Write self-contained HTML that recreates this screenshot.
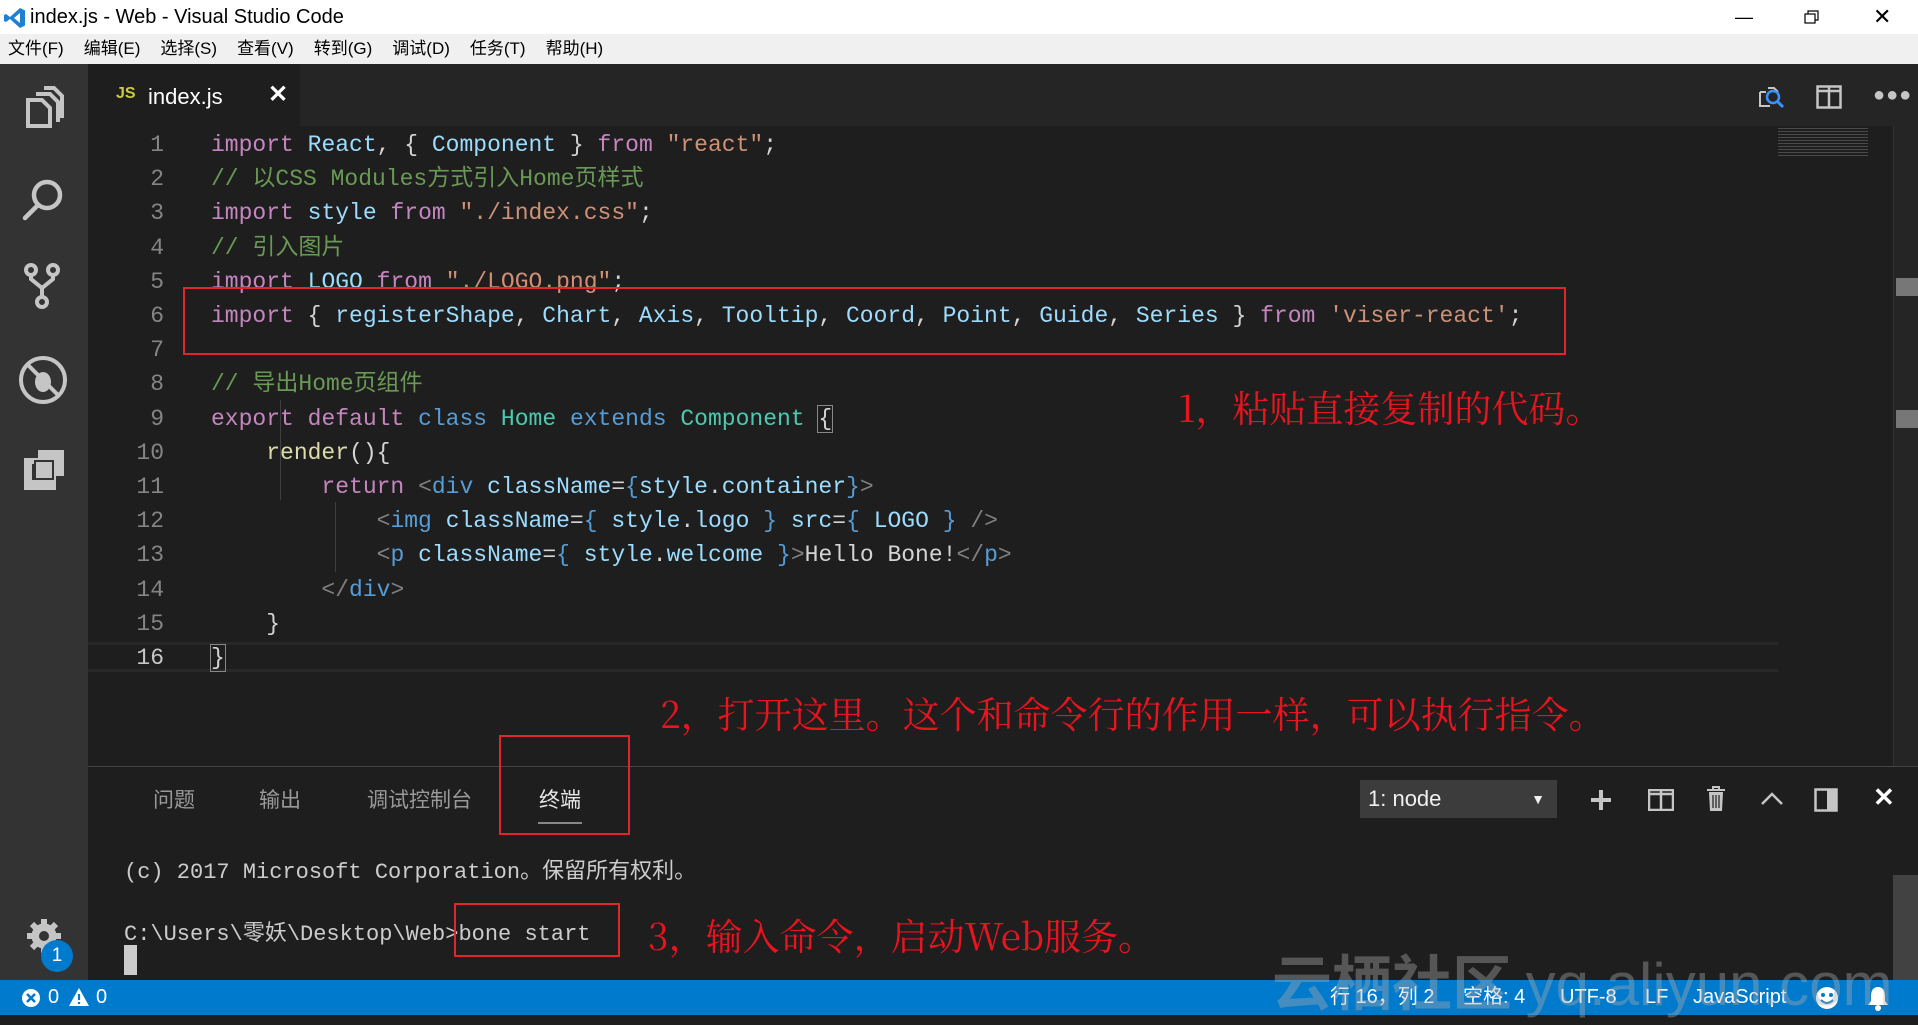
<!DOCTYPE html>
<html><head><meta charset="utf-8"><style>
*{margin:0;padding:0;box-sizing:border-box}
body{width:1918px;height:1015px;overflow:hidden;background:#1e1e1e;position:relative;font-family:"Liberation Sans","Noto Sans CJK SC",sans-serif}
.a{position:absolute}
.title{left:0;top:0;width:1918px;height:34px;background:#fff;color:#000;font-size:20px;line-height:34px}
.menu{left:0;top:34px;width:1918px;height:30px;background:#f0f0f0;color:#000;font-size:17px;line-height:30px}
.menu span{margin-left:8px;margin-right:12px}
.act{left:0;top:64px;width:88px;height:916px;background:#333}
.tabs{left:88px;top:64px;width:1830px;height:62px;background:#252526}
.tab{left:88px;top:64px;width:212px;height:62px;background:#1e1e1e}
.code{left:88px;top:128px;font-family:"Liberation Mono","Noto Sans CJK SC",monospace;font-size:23px;line-height:34.2px;white-space:pre}
.ln{position:absolute;left:0;width:76px;text-align:right;color:#858585}
.tx{position:absolute;left:123px}
.k{color:#c586c0}.v{color:#9cdcfe}.s{color:#ce9178}.c{color:#6a9955}.b{color:#569cd6}.t{color:#4ec9b0}.f{color:#dcdcaa}.p{color:#d4d4d4}.g{color:#808080}
.red{position:absolute;border:2px solid #e0262b}
.ann{position:absolute;color:#e8141e;font-family:"Noto Serif CJK SC","Liberation Serif",serif;font-size:37px;line-height:40px;white-space:nowrap}
.panel{left:88px;top:766px;width:1830px;height:214px;background:#1e1e1e;border-top:1px solid #444}
.ptab{position:absolute;top:784px;font-size:21px;color:#999}
.term{position:absolute;left:124px;font-family:"Liberation Mono","Noto Sans CJK SC",monospace;font-size:22px;color:#ccc;white-space:pre}
.status{left:0;top:980px;width:1918px;height:35px;background:#007acc;color:#fff;font-size:20px;line-height:35px}
</style></head><body>
<div class="a title"><svg class="a" style="left:3px;top:6px" width="24" height="24" viewBox="0 0 24 24"><path d="M17 2 L22 4.5 V19.5 L17 22 L7 13 L3 16 L1 15 V9 L3 8 L7 11 Z M17 7 L11 12 L17 17 Z" fill="#1f7fd1"/></svg><span class="a" style="left:30px">index.js - Web - Visual Studio Code</span>
<span class="a" style="left:1735px;top:0;font-size:18px">—</span>
<svg class="a" style="left:1804px;top:10px" width="16" height="14"><rect x="1" y="4" width="10" height="9" fill="none" stroke="#000" stroke-width="1.2"/><path d="M4 4V1H14V10H11" fill="none" stroke="#000" stroke-width="1.2"/></svg>
<span class="a" style="left:1873px;top:0;font-size:22px">✕</span></div>
<div class="a menu"><span>文件(F)</span><span>编辑(E)</span><span>选择(S)</span><span>查看(V)</span><span>转到(G)</span><span>调试(D)</span><span>任务(T)</span><span>帮助(H)</span></div>
<div class="a act">
<svg class="a" style="left:24px;top:22px" width="40" height="44" viewBox="0 0 40 44" fill="none" stroke="#c5c5c5" stroke-width="4"><path d="M4 14h14l8 8v18H4z"/><path d="M12 8h14l8 8v20"/><path d="M20 2h10l8 8v22"/></svg>
<svg class="a" style="left:20px;top:112px" width="46" height="46" viewBox="0 0 46 46" fill="none" stroke="#c5c5c5" stroke-width="4.5"><circle cx="27" cy="19" r="13"/><path d="M18 29L5 42" stroke-linecap="round"/></svg>
<svg class="a" style="left:22px;top:198px" width="40" height="48" viewBox="0 0 40 48" fill="none" stroke="#c5c5c5" stroke-width="4"><circle cx="9" cy="8" r="5"/><circle cx="31" cy="8" r="5"/><circle cx="20" cy="40" r="5"/><path d="M9 13v4l11 9 11-9v-4M20 26v9"/></svg>
<svg class="a" style="left:17px;top:290px" width="52" height="52" viewBox="0 0 52 52" fill="none" stroke="#c5c5c5" stroke-width="4"><circle cx="26" cy="26" r="22"/><path d="M11 11l30 30"/><ellipse cx="26" cy="28" rx="8" ry="10" fill="#c5c5c5" stroke="none"/></svg>
<svg class="a" style="left:24px;top:386px" width="40" height="40" viewBox="0 0 40 40"><path d="M0 8h14V0h26v26h-8v14H0z" fill="#c5c5c5"/><rect x="8" y="14" width="16" height="16" fill="#333"/><rect x="11" y="11" width="18" height="18" fill="#c5c5c5" stroke="#333" stroke-width="2"/></svg>
<svg class="a" style="left:24px;top:852px" width="40" height="40" viewBox="0 0 40 40"><circle cx="20" cy="20" r="9" fill="none" stroke="#c5c5c5" stroke-width="7"/><path d="M20 3v34M3 20h34M8 8l24 24M32 8L8 32" stroke="#c5c5c5" stroke-width="6"/><circle cx="20" cy="20" r="5" fill="#333"/></svg>
<div class="a" style="left:41px;top:876px;width:32px;height:32px;border-radius:50%;background:#007acc;color:#fff;font-size:19px;text-align:center;line-height:32px">1</div>
</div>
<div class="a tabs"></div>
<div class="a tab"><span class="a" style="left:28px;top:21px;color:#cbcb41;font-size:16px;font-weight:bold">JS</span><span class="a" style="left:60px;top:20px;color:#fff;font-size:22px">index.js</span><span class="a" style="left:180px;top:16px;color:#fff;font-size:24px;font-weight:bold">✕</span></div>
<svg class="a" style="left:1758px;top:84px" width="28" height="26" viewBox="0 0 28 26" fill="none"><path d="M2 8h6M2 8v14h10M10 4h6l4 4" stroke="#c5c5c5" stroke-width="2"/><circle cx="15" cy="13" r="6" stroke="#3794ff" stroke-width="2.5"/><path d="M19 17l6 6" stroke="#3794ff" stroke-width="3"/></svg>
<svg class="a" style="left:1816px;top:85px" width="26" height="24"><rect x="1.5" y="1.5" width="23" height="21" fill="none" stroke="#c5c5c5" stroke-width="2.5"/><path d="M13 2v20M2 6h22" stroke="#c5c5c5" stroke-width="2.5"/></svg>
<span class="a" style="left:1873px;top:84px;color:#c5c5c5;font-size:20px;letter-spacing:1px">●●●</span>
<div class="a" style="left:1778px;top:126px;width:90px;height:30px;opacity:.5;background:repeating-linear-gradient(#1e1e1e 0 2px,#777 2px 3px)"></div>
<div class="a" style="left:1893px;top:126px;width:25px;height:640px;background:#252526;border-left:1px solid #333"></div>
<div class="a" style="left:1896px;top:278px;width:22px;height:18px;background:#777"></div>
<div class="a" style="left:1896px;top:410px;width:22px;height:18px;background:#777"></div>
<div class="a" style="left:88px;top:642px;width:1690px;height:30px;border-top:3px solid #282828;border-bottom:3px solid #282828"></div>
<div class="a code">
<div style="position:absolute;top:0;width:1800px;height:34px"><span class="ln">1</span><span class="tx"><span class="k">import</span> <span class="v">React</span><span class="p">, { </span><span class="v">Component</span><span class="p"> } </span><span class="k">from</span> <span class="s">"react"</span><span class="p">;</span></span></div>
<div style="position:absolute;top:34.2px"><span class="ln">2</span><span class="tx c">// 以CSS Modules方式引入Home页样式</span></div>
<div style="position:absolute;top:68.4px"><span class="ln">3</span><span class="tx"><span class="k">import</span> <span class="v">style</span> <span class="k">from</span> <span class="s">"./index.css"</span><span class="p">;</span></span></div>
<div style="position:absolute;top:102.6px"><span class="ln">4</span><span class="tx c">// 引入图片</span></div>
<div style="position:absolute;top:136.8px"><span class="ln">5</span><span class="tx"><span class="k">import</span> <span class="v">LOGO</span> <span class="k">from</span> <span class="s">"./LOGO.png"</span><span class="p">;</span></span></div>
<div style="position:absolute;top:171px"><span class="ln">6</span><span class="tx"><span class="k">import</span><span class="p"> { </span><span class="v">registerShape</span><span class="p">, </span><span class="v">Chart</span><span class="p">, </span><span class="v">Axis</span><span class="p">, </span><span class="v">Tooltip</span><span class="p">, </span><span class="v">Coord</span><span class="p">, </span><span class="v">Point</span><span class="p">, </span><span class="v">Guide</span><span class="p">, </span><span class="v">Series</span><span class="p"> } </span><span class="k">from</span> <span class="s">'viser-react'</span><span class="p">;</span></span></div>
<div style="position:absolute;top:205.2px"><span class="ln">7</span></div>
<div style="position:absolute;top:239.4px"><span class="ln">8</span><span class="tx c">// 导出Home页组件</span></div>
<div style="position:absolute;top:273.6px"><span class="ln">9</span><span class="tx"><span class="k">export</span> <span class="k">default</span> <span class="b">class</span> <span class="t">Home</span> <span class="b">extends</span> <span class="t">Component</span> <span class="p" style="outline:1px solid #888">{</span></span></div>
<div style="position:absolute;top:307.8px"><span class="ln">10</span><span class="tx">    <span class="f">render</span><span class="p">(){</span></span></div>
<div style="position:absolute;top:342px"><span class="ln">11</span><span class="tx">        <span class="k">return</span> <span class="g">&lt;</span><span class="b">div</span> <span class="v">className</span><span class="p">=</span><span class="b">{</span><span class="v">style</span><span class="p">.</span><span class="v">container</span><span class="b">}</span><span class="g">&gt;</span></span></div>
<div style="position:absolute;top:376.2px"><span class="ln">12</span><span class="tx">            <span class="g">&lt;</span><span class="b">img</span> <span class="v">className</span><span class="p">=</span><span class="b">{</span> <span class="v">style</span><span class="p">.</span><span class="v">logo</span> <span class="b">}</span> <span class="v">src</span><span class="p">=</span><span class="b">{</span> <span class="v">LOGO</span> <span class="b">}</span> <span class="g">/&gt;</span></span></div>
<div style="position:absolute;top:410.4px"><span class="ln">13</span><span class="tx">            <span class="g">&lt;</span><span class="b">p</span> <span class="v">className</span><span class="p">=</span><span class="b">{</span> <span class="v">style</span><span class="p">.</span><span class="v">welcome</span> <span class="b">}</span><span class="g">&gt;</span><span class="p">Hello Bone!</span><span class="g">&lt;/</span><span class="b">p</span><span class="g">&gt;</span></span></div>
<div style="position:absolute;top:444.6px"><span class="ln">14</span><span class="tx">        <span class="g">&lt;/</span><span class="b">div</span><span class="g">&gt;</span></span></div>
<div style="position:absolute;top:478.8px"><span class="ln">15</span><span class="tx">    <span class="p">}</span></span></div>
<div style="position:absolute;top:513px"><span class="ln" style="color:#c6c6c6">16</span><span class="tx"><span class="p" style="outline:1px solid #888">}</span></span></div>
</div>
<div class="a" style="left:280px;top:400px;width:1px;height:100px;background:#404040"></div>
<div class="a" style="left:335px;top:502px;width:1px;height:70px;background:#404040"></div>
<div class="red" style="left:183px;top:287px;width:1383px;height:68px"></div>
<div class="ann" style="left:1178px;top:386px">1，粘贴直接复制的代码。</div>
<div class="ann" style="left:660px;top:692px">2，打开这里。这个和命令行的作用一样，可以执行指令。</div>
<div class="a panel"></div>
<span class="ptab" style="left:153px">问题</span><span class="ptab" style="left:259px">输出</span><span class="ptab" style="left:367px">调试控制台</span><span class="ptab" style="left:539px;color:#e7e7e7">终端</span>
<div class="a" style="left:538px;top:822px;width:44px;height:2px;background:#888"></div>
<div class="red" style="left:499px;top:735px;width:131px;height:100px"></div>
<div class="a" style="left:1360px;top:780px;width:197px;height:38px;background:#3c3c3c;color:#f0f0f0;font-size:22px;line-height:38px;padding-left:8px">1: node<span style="position:absolute;right:12px;font-size:14px">▼</span></div>
<svg class="a" style="left:1589px;top:788px" width="24" height="24"><path d="M12 2v20M2 12h20" stroke="#c5c5c5" stroke-width="4"/></svg>
<svg class="a" style="left:1648px;top:789px" width="26" height="22"><rect x="1" y="1" width="24" height="20" fill="none" stroke="#c5c5c5" stroke-width="2.5"/><path d="M13 1v20M1 5h24" stroke="#c5c5c5" stroke-width="2.5"/></svg>
<svg class="a" style="left:1706px;top:786px" width="20" height="26"><path d="M1 4h18M7 4V1h6v3" stroke="#c5c5c5" stroke-width="2" fill="none"/><path d="M3 6h14l-1 19H4z" fill="#c5c5c5"/><path d="M7 9v13M10 9v13M13 9v13" stroke="#1e1e1e" stroke-width="1.2"/></svg>
<svg class="a" style="left:1760px;top:790px" width="24" height="16"><path d="M2 14L12 4l10 10" stroke="#c5c5c5" stroke-width="2.5" fill="none"/></svg>
<svg class="a" style="left:1814px;top:788px" width="24" height="24"><rect x="1.5" y="1.5" width="21" height="21" fill="none" stroke="#c5c5c5" stroke-width="2.5"/><rect x="13" y="2" width="9" height="20" fill="#c5c5c5"/></svg>
<span class="a" style="left:1873px;top:782px;color:#fff;font-size:26px;font-weight:bold">✕</span>
<div class="term" style="top:853px">(c) 2017 Microsoft Corporation。保留所有权利。</div>
<div class="term" style="top:915px">C:\Users\零妖\Desktop\Web&gt;bone start</div>
<div class="a" style="left:124px;top:945px;width:13px;height:30px;background:#ccc"></div>
<div class="red" style="left:454px;top:903px;width:166px;height:54px"></div>
<div class="ann" style="left:648px;top:914px">3，输入命令，启动Web服务。</div>
<div class="a" style="left:1893px;top:875px;width:25px;height:105px;background:#424242"></div>
<div class="a status">
<svg class="a" style="left:21px;top:8px" width="20" height="20"><circle cx="10" cy="10" r="9" fill="#fff"/><path d="M6 6l8 8M14 6l-8 8" stroke="#007acc" stroke-width="2.5"/></svg>
<span class="a" style="left:48px">0</span>
<svg class="a" style="left:68px;top:7px" width="22" height="20"><path d="M11 1L21 19H1z" fill="#fff"/><path d="M11 7v6M11 15v2" stroke="#007acc" stroke-width="2.2"/></svg>
<span class="a" style="left:96px">0</span>
<span class="a" style="left:1330px">行 16，列 2</span><span class="a" style="left:1463px">空格: 4</span><span class="a" style="left:1560px">UTF-8</span><span class="a" style="left:1645px">LF</span><span class="a" style="left:1693px">JavaScript</span>
<svg class="a" style="left:1815px;top:6px" width="24" height="24"><circle cx="12" cy="12" r="11" fill="#fff"/><circle cx="8" cy="9" r="2" fill="#007acc"/><circle cx="16" cy="9" r="2" fill="#007acc"/><path d="M6 14q6 6 12 0" stroke="#007acc" stroke-width="2" fill="none"/></svg>
<svg class="a" style="left:1867px;top:5px" width="22" height="26"><path d="M11 2c5 0 7 4 7 9v5l3 4H1l3-4v-5c0-5 2-9 7-9z" fill="#fff"/><circle cx="11" cy="23" r="3" fill="#fff"/></svg>
</div>
<div class="a" style="left:1272px;top:940px;font-size:60px;font-weight:bold;color:rgba(170,170,170,.4);white-space:nowrap;font-family:'Noto Sans CJK SC',sans-serif;line-height:80px">云栖社区 <span style="font-family:'Liberation Sans',sans-serif;font-weight:normal">yq.aliyun.com</span></div>
</body></html>
